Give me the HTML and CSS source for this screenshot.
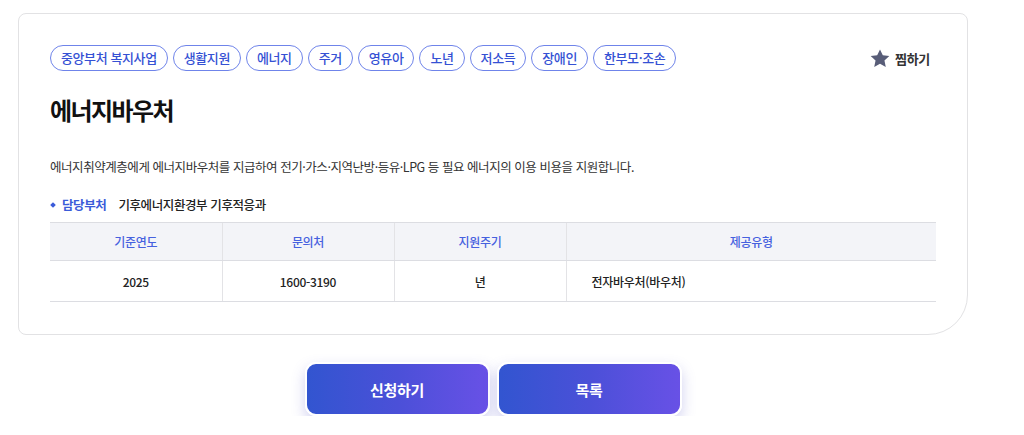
FILE: index.html
```html
<!DOCTYPE html>
<html lang="ko">
<head>
<meta charset="utf-8">
<link rel="stylesheet" href="styles.css">
</head>
<body>
<div class="page">
  <section class="card">
    <div class="top">
      <ul class="tags">
        <li>중앙부처 복지사업</li>
        <li>생활지원</li>
        <li>에너지</li>
        <li>주거</li>
        <li>영유아</li>
        <li>노년</li>
        <li>저소득</li>
        <li>장애인</li>
        <li>한부모·조손</li>
      </ul>
      <button class="fav">
        <svg width="20" height="19" viewBox="0 0 24 23"><path d="M12 0.5l3.4 7.2 7.9 0.9-5.9 5.4 1.6 7.9L12 17.9l-7 4 1.6-7.9L0.7 8.6l7.9-0.9z" fill="#585d78"/></svg>
        <span>찜하기</span>
      </button>
    </div>
    <h1 class="title">에너지바우처</h1>
    <p class="desc">에너지취약계층에게 에너지바우처를 지급하여 전기·가스·지역난방·등유·LPG 등 필요 에너지의 이용 비용을 지원합니다.</p>
    <div class="dept"><span class="dept-label">담당부처</span><span class="dept-value">기후에너지환경부 기후적응과</span></div>
    <table class="info">
      <thead>
        <tr><th class="c1">기준연도</th><th class="c2">문의처</th><th class="c3">지원주기</th><th class="c4">제공유형</th></tr>
      </thead>
      <tbody>
        <tr><td>2025</td><td>1600-3190</td><td>년</td><td class="left">전자바우처(바우처)</td></tr>
      </tbody>
    </table>
  </section>
  <div class="actions">
    <button class="btn">신청하기</button>
    <button class="btn">목록</button>
  </div>
</div>
</body>
</html>
```
FILE: styles.css
```css
* { box-sizing: border-box; }
html, body { margin: 0; padding: 0; background: #fff; }
body {
  font-family: "Noto Sans CJK KR", "Noto Sans", sans-serif;
  color: #222;
}
.page {
  width: 950px;
  margin-left: 18px;
  padding-top: 13px;
}
.card {
  height: 322px;
  border: 1px solid #e2e2e4;
  border-radius: 8px 8px 40px 8px;
  padding: 31px 31px 0 31px;
}
.top {
  display: flex;
  justify-content: space-between;
  align-items: center;
}
.tags {
  list-style: none;
  margin: 0;
  padding: 0;
  display: flex;
  gap: 5px;
}
.tags li {
  height: 26px;
  padding: 0 10px;
  border: 1px solid #6f84ea;
  border-radius: 13px;
  color: #3551d4;
  font-size: 13px;
  font-weight: 500;
  line-height: 24px;
  letter-spacing: -0.4px;
}
.fav {
  display: flex;
  align-items: center;
  gap: 5px;
  background: none;
  border: 0;
  padding: 0;
  margin-right: 6px;
  font-family: inherit;
  font-size: 13px;
  font-weight: 700;
  color: #333;
  letter-spacing: -0.3px;
}
.title {
  margin: 23px 0 0;
  font-size: 24px;
  line-height: 32px;
  font-weight: 700;
  letter-spacing: -1.6px;
  color: #111;
}
.desc {
  margin: 32px 0 0;
  font-size: 12.5px;
  line-height: 18px;
  color: #333;
  letter-spacing: -0.45px;
}
.dept {
  margin-top: 20px;
  display: flex;
  align-items: center;
  font-size: 12.5px;
  line-height: 18px;
  font-weight: 500;
  letter-spacing: -0.4px;
}
.dept-label {
  position: relative;
  padding-left: 12px;
  color: #3a5bd9;
  font-weight: 700;
  margin-right: 12px;
}
.dept-label::before {
  content: "";
  position: absolute;
  left: 1px;
  top: 7px;
  width: 4px;
  height: 4px;
  background: #3a5bd9;
  transform: rotate(45deg);
}
.dept-value { color: #222; }
.info {
  width: 100%;
  margin-top: 8px;
  border-collapse: collapse;
  font-size: 12px;
  letter-spacing: -0.3px;
}
.info th {
  height: 38px;
  background: #f3f4f8;
  border-top: 1px solid #dcdde2;
  border-bottom: 1px solid #dcdde2;
  color: #4661df;
  font-weight: 500;
}
.info th + th, .info td + td { border-left: 1px solid #e3e3e6; }
.info .c1, .info .c2, .info .c3 { width: 172px; }
.info td {
  height: 41px;
  text-align: center;
  font-weight: 500;
  color: #222;
  border-bottom: 1px solid #dcdde2;
}
.info td.left { text-align: left; padding-left: 25px; }
.actions {
  display: flex;
  justify-content: center;
  gap: 7px;
  margin-top: 27px;
}
.btn {
  width: 185px;
  height: 54px;
  border: 2px solid #fff;
  border-radius: 11px;
  background: linear-gradient(90deg, #3255d0 0%, #4b50d8 50%, #6851e6 100%);
  color: #fff;
  font-family: inherit;
  font-size: 15px;
  font-weight: 700;
  letter-spacing: -0.3px;
  box-shadow: 0 6px 14px rgba(90, 90, 200, 0.28);
}
```
